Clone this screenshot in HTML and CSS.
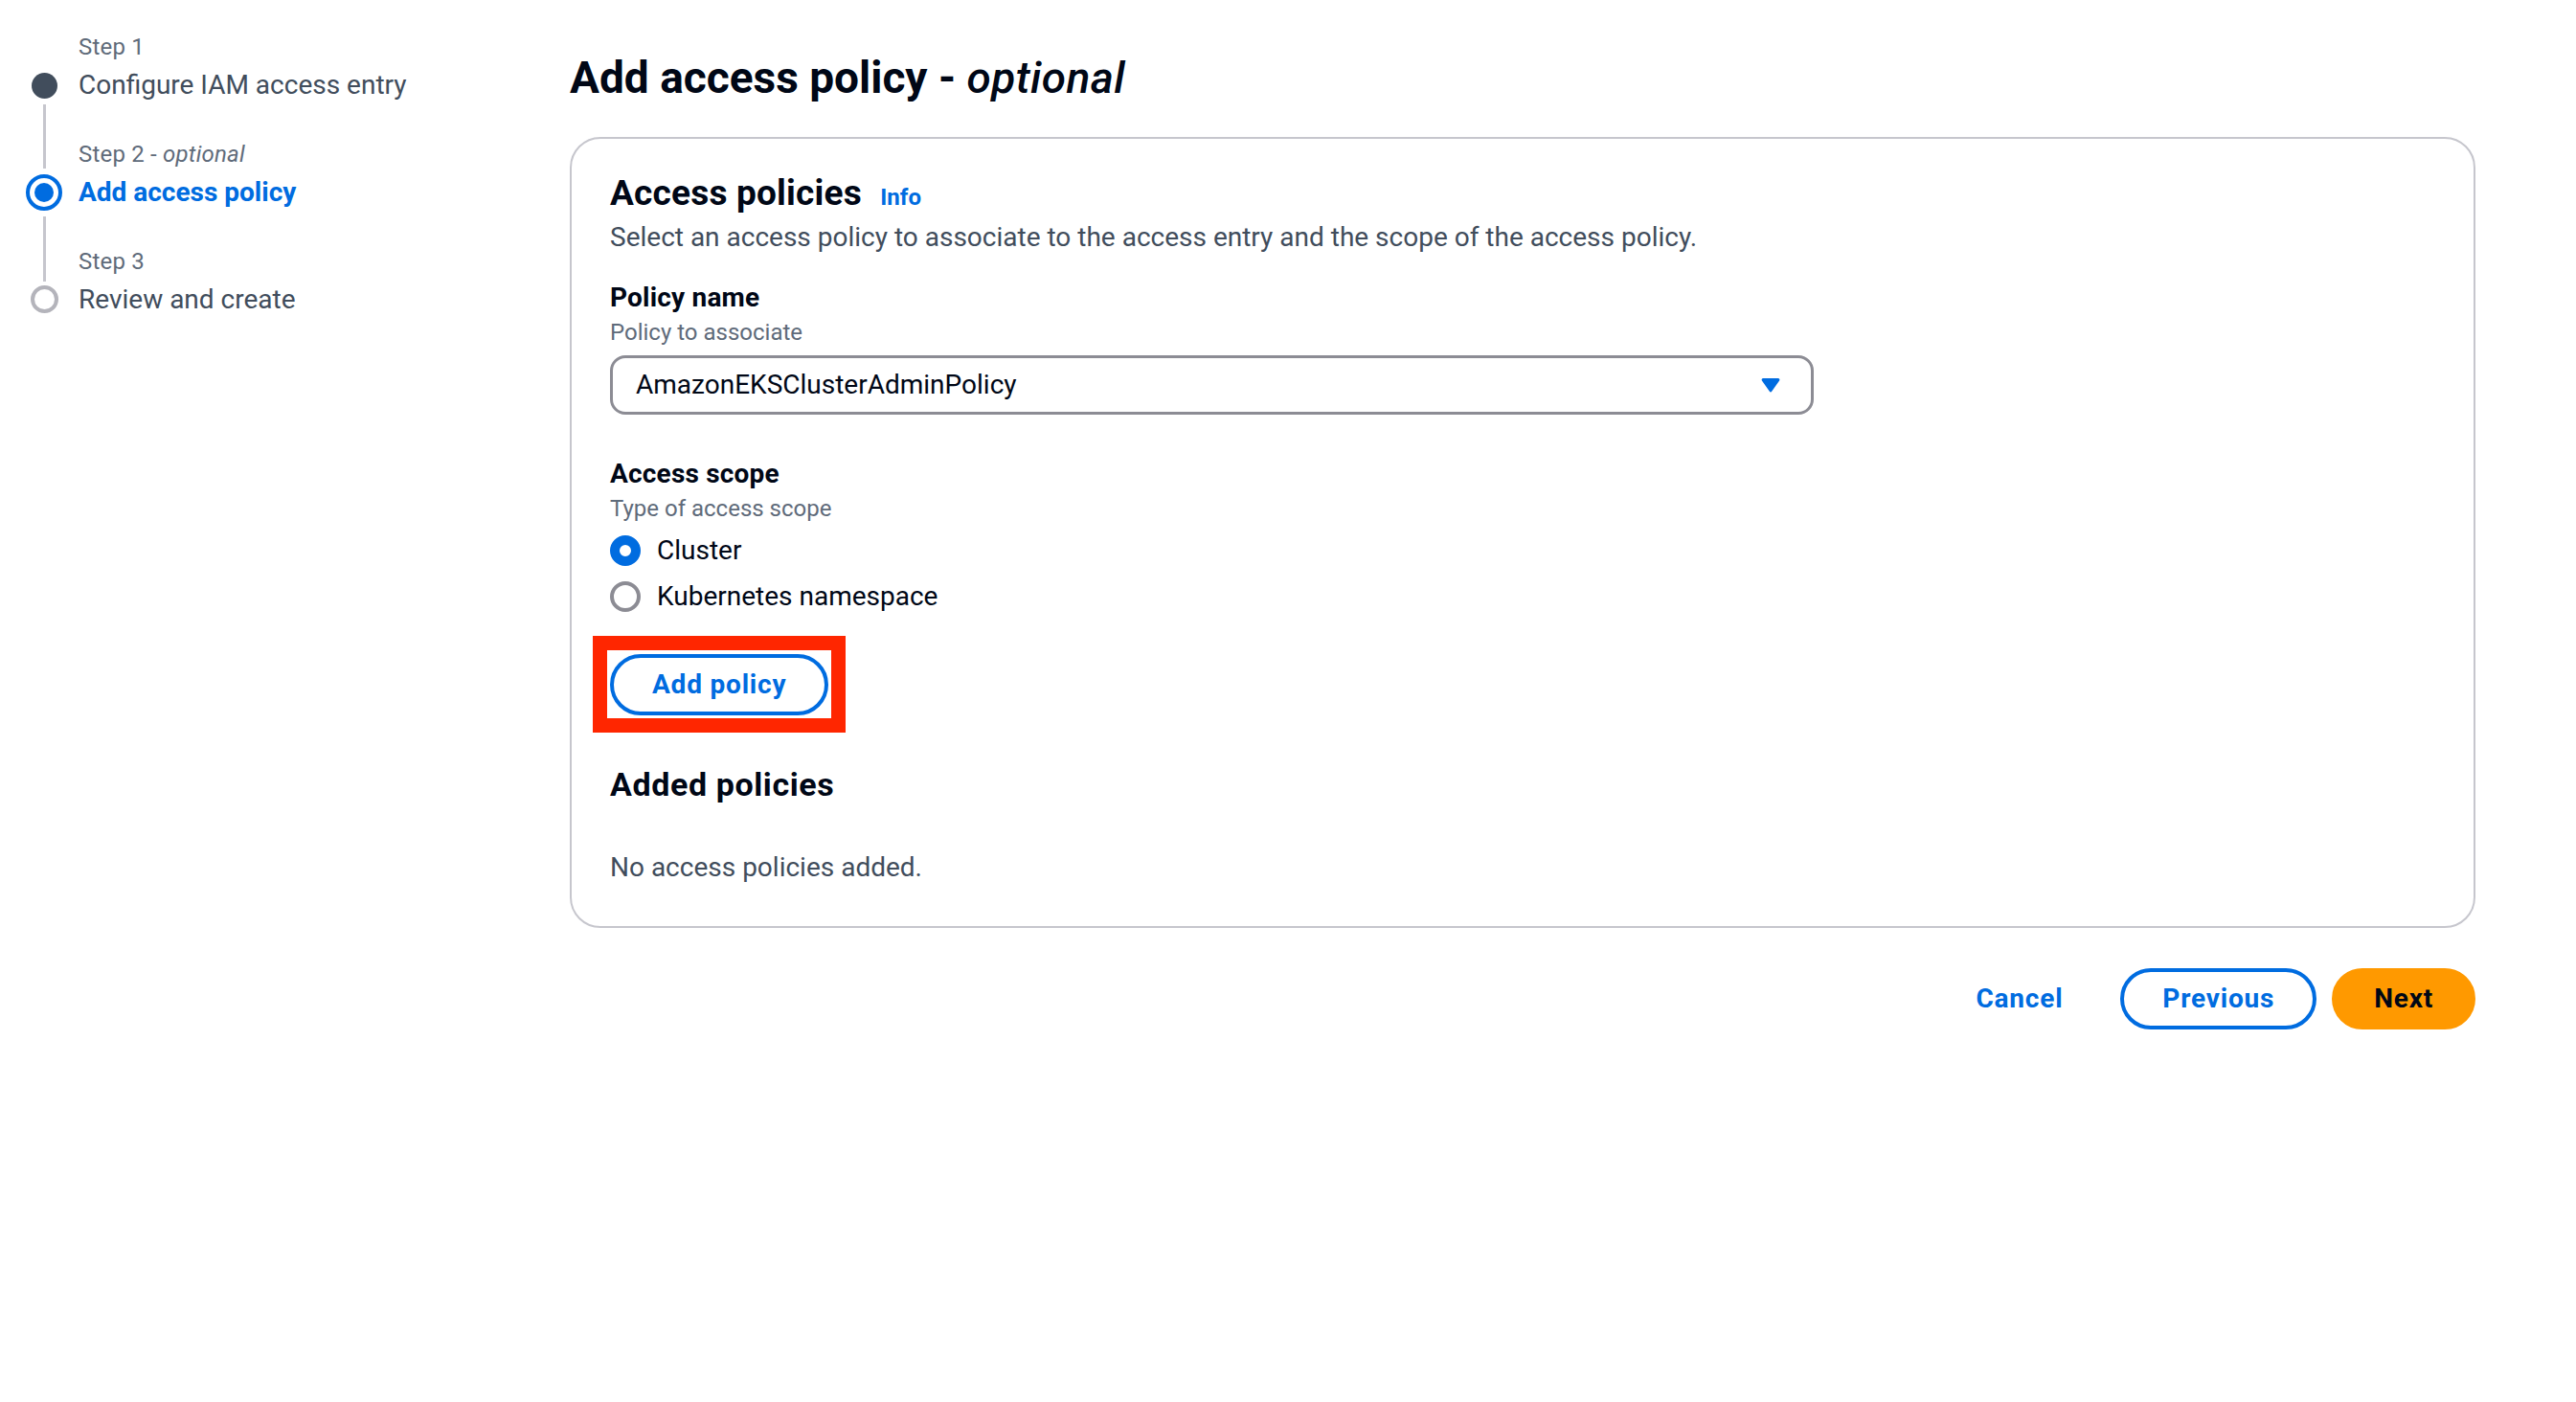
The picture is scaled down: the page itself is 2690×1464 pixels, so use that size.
FILE: index.html
```html
<!DOCTYPE html>
<html lang="en">
<head>
<meta charset="utf-8">
<title>Add access policy</title>
<link rel="stylesheet" href="styles.css">
</head>
<body>
<div class="page">
  <nav class="steps">
    <div class="step step-done">
      <div class="marker">
        <span class="seg seg-top seg-hidden"></span>
        <span class="dot dot-done"></span>
        <span class="seg seg-bottom"></span>
      </div>
      <div class="step-text">
        <div class="step-label">Step 1</div>
        <div class="step-title">Configure IAM access entry</div>
      </div>
    </div>
    <div class="step step-active">
      <div class="marker">
        <span class="seg seg-top"></span>
        <span class="dot dot-active"></span>
        <span class="seg seg-bottom"></span>
      </div>
      <div class="step-text">
        <div class="step-label">Step 2 - <i>optional</i></div>
        <div class="step-title step-title-active">Add access policy</div>
      </div>
    </div>
    <div class="step step-next">
      <div class="marker">
        <span class="seg seg-top seg-top-last"></span>
        <span class="dot dot-next"></span>
        <span class="seg seg-bottom seg-hidden"></span>
      </div>
      <div class="step-text">
        <div class="step-label">Step 3</div>
        <div class="step-title">Review and create</div>
      </div>
    </div>
  </nav>

  <main class="main">
    <h1 class="page-title">Add access policy - <i class="optional">optional</i></h1>

    <section class="card">
      <h2 class="card-title">Access policies <a class="info-link" href="#">Info</a></h2>
      <p class="card-desc">Select an access policy to associate to the access entry and the scope of the access policy.</p>

      <div class="field field-policy">
        <div class="field-label">Policy name</div>
        <div class="field-desc">Policy to associate</div>
        <div class="select">
          <span class="select-value">AmazonEKSClusterAdminPolicy</span>
          <svg class="caret" width="20" height="16" viewBox="0 0 20 16" aria-hidden="true">
            <path d="M2.2 1 H17.8 A1.6 1.6 0 0 1 19.1 3.5 L11.3 14.6 A1.6 1.6 0 0 1 8.7 14.6 L0.9 3.5 A1.6 1.6 0 0 1 2.2 1 Z" fill="currentColor"/>
          </svg>
        </div>
      </div>

      <div class="field field-scope">
        <div class="field-label">Access scope</div>
        <div class="field-desc">Type of access scope</div>
        <div class="radios">
          <div class="radio-row"><span class="radio radio-checked"></span><span class="radio-label">Cluster</span></div>
          <div class="radio-row"><span class="radio"></span><span class="radio-label">Kubernetes namespace</span></div>
        </div>
      </div>

      <div class="add-row">
        <span class="highlight"><button class="btn btn-normal" type="button">Add policy</button></span>
      </div>

      <h3 class="sub-title">Added policies</h3>
      <p class="empty-text">No access policies added.</p>
    </section>

    <div class="actions">
      <button class="btn btn-link" type="button">Cancel</button>
      <button class="btn btn-normal" type="button">Previous</button>
      <button class="btn btn-primary" type="button">Next</button>
    </div>
  </main>
</div>
</body>
</html>
```
FILE: styles.css
```css
* { box-sizing: border-box; }

html, body {
  margin: 0;
  padding: 0;
  background: #ffffff;
}

body {
  font-family: Roboto, "Noto Sans", "Liberation Sans", sans-serif;
  font-size: 28px;
  line-height: 40px;
  color: #000716;
}

.page {
  display: flex;
  align-items: flex-start;
}

/* ---------- Wizard navigation ---------- */
.steps {
  width: 595px;
  flex: none;
  padding: 33px 0 0 18px;
}

.step {
  display: flex;
  gap: 8px;
}

.marker {
  width: 56px;
  flex: none;
  display: flex;
  flex-direction: column;
  align-items: center;
}

.seg {
  flex: 1;
  width: 3px;
  background: #c6c6cd;
}

.seg-top { margin-bottom: 6px; }
.seg-top-last { margin-bottom: 4px; }
.seg-bottom { margin-top: 6px; }
.seg-hidden { visibility: hidden; }

.dot {
  flex: none;
  border-radius: 50%;
}

.dot-done {
  width: 27px;
  height: 27px;
  background: #414d5c;
}

.dot-active {
  width: 38px;
  height: 38px;
  border: 4px solid #006ce0;
  display: flex;
  align-items: center;
  justify-content: center;
}

.dot-active::before {
  content: "";
  width: 20px;
  height: 20px;
  border-radius: 50%;
  background: #006ce0;
}

.dot-next {
  width: 29px;
  height: 29px;
  border: 4px solid #b4b4bb;
}

.step-text {
  padding-bottom: 36px;
}

.step-label {
  font-size: 24px;
  line-height: 32px;
  color: #5f6b7a;
  letter-spacing: 0.2px;
}

.step-title {
  margin-top: 4px;
  font-size: 28px;
  line-height: 40px;
  color: #414d5c;
}

.step-title-active {
  color: #006ce0;
  font-weight: 700;
}

/* ---------- Main column ---------- */
.main {
  width: 1990px;
  flex: none;
  padding-top: 51px;
}

.page-title {
  margin: 0;
  font-size: 46px;
  line-height: 60px;
  font-weight: 700;
  color: #000716;
}

.optional {
  font-weight: 500;
  letter-spacing: 0.4px;
}

.card {
  margin-top: 32px;
  border: 2px solid #c6c6cd;
  border-radius: 32px;
  padding: 35px 40px 41px 40px;
}

.card-title {
  margin: 0;
  font-size: 37px;
  line-height: 44px;
  font-weight: 700;
  letter-spacing: 0.2px;
}

.info-link {
  margin-left: 10px;
  font-size: 24px;
  font-weight: 700;
  color: #006ce0;
  text-decoration: none;
  letter-spacing: 0;
}

.card-desc {
  margin: 0;
  color: #414d5c;
}

.field-policy { margin-top: 23px; }
.field-scope { margin-top: 42px; }

.field-label {
  font-weight: 700;
  letter-spacing: 0.2px;
}

.field-desc {
  font-size: 24px;
  line-height: 32px;
  color: #5f6b7a;
}

.select {
  margin-top: 8px;
  width: 1257px;
  height: 62px;
  border: 3px solid #8c8c94;
  border-radius: 16px;
  padding: 8px 32px 8px 24px;
  display: flex;
  align-items: center;
  justify-content: space-between;
}

.select-value {
  color: #000716;
}

.caret {
  color: #006ce0;
  display: block;
}

.radios {
  margin-top: 8px;
  display: flex;
  flex-direction: column;
  gap: 8px;
}

.radio-row {
  display: flex;
  align-items: center;
  gap: 17px;
  height: 40px;
}

.radio {
  width: 32px;
  height: 32px;
  border-radius: 50%;
  border: 4px solid #8c8c94;
  flex: none;
}

.radio-checked {
  border: 10px solid #006ce0;
}

.radio-label {
  color: #000716;
}

.add-row {
  margin-top: 40px;
  display: flex;
}

.highlight {
  position: relative;
  display: inline-flex;
}

.highlight::after {
  content: "";
  position: absolute;
  top: -19px;
  bottom: -18px;
  left: -18px;
  right: -18px;
  border: 15px solid #ff2600;
  pointer-events: none;
}

.btn {
  font-family: inherit;
  font-size: 28px;
  line-height: 40px;
  font-weight: 700;
  letter-spacing: 0.8px;
  border-radius: 999px;
  border: 4px solid transparent;
  padding: 8px 40px;
  background: transparent;
  cursor: pointer;
}

.btn-normal {
  border-color: #006ce0;
  color: #006ce0;
  background: #ffffff;
}

.btn-link {
  color: #006ce0;
}

.btn-primary {
  background: #ff9900;
  border-color: #ff9900;
  color: #000716;
}

.sub-title {
  margin: 52px 0 0;
  font-size: 34px;
  line-height: 40px;
  font-weight: 700;
  letter-spacing: 0.6px;
}

.empty-text {
  margin: 47px 0 0;
  color: #414d5c;
}

.actions {
  margin-top: 42px;
  display: flex;
  justify-content: flex-end;
  gap: 16px;
}
```
